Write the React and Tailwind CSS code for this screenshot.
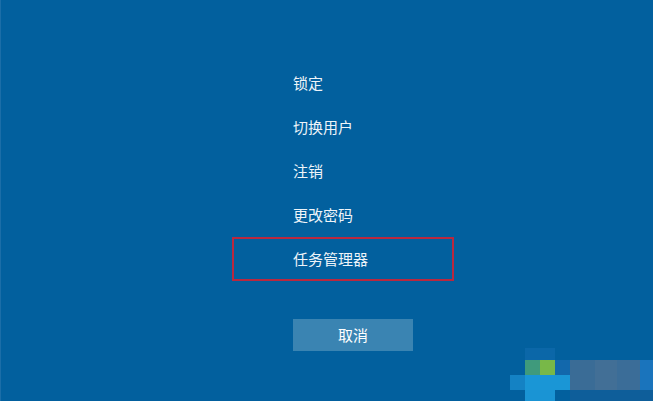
import React from 'react';

const items = ['锁定', '切换用户', '注销', '更改密码'];

// pixel mosaic in the bottom-right corner
const blocks = [
  { x: 525, y: 348, w: 30, h: 12, c: '#0b67a8' },
  { x: 525, y: 360, w: 15, h: 15, c: '#3f9a7c' },
  { x: 540, y: 360, w: 15, h: 15, c: '#78b848' },
  { x: 555, y: 360, w: 15, h: 15, c: '#1268ac' },
  { x: 570, y: 360, w: 25, h: 30, c: '#3a6c96' },
  { x: 595, y: 360, w: 22, h: 30, c: '#426f96' },
  { x: 617, y: 360, w: 23, h: 30, c: '#3b6d98' },
  { x: 640, y: 360, w: 13, h: 30, c: '#1a74bc' },
  { x: 510, y: 375, w: 15, h: 15, c: '#1482c4' },
  { x: 525, y: 375, w: 45, h: 15, c: '#1a96d6' },
  { x: 525, y: 390, w: 30, h: 11, c: '#1a94d4' },
  { x: 570, y: 390, w: 83, h: 11, c: '#0e5e9a' },
];

export default function App() {
  return (
    <div
      className="relative w-[653px] h-[401px] overflow-hidden bg-[#02609e] border-l border-[#1b6ea8] flex flex-col pt-[61px]"
      style={{ fontFamily: '"Noto Sans CJK SC", "Noto Sans", sans-serif' }}
    >
      <div className="ml-[231px] flex flex-col">
        {items.map((t) => (
          <div key={t} className="h-[44px] w-[222px] flex items-center pl-[61px] text-[15px] text-[#eef4f9]">
            {t}
          </div>
        ))}
        <div className="h-[44px] w-[222px] flex items-center pl-[59px] border-2 border-[#b9283f] text-[15px] text-[#eef4f9]">
          任务管理器
        </div>
      </div>

      <button className="mt-[38px] ml-[292px] w-[120px] h-[32px] bg-[#3a84b2] text-[15px] text-white flex items-center justify-center">
        取消
      </button>

      <svg className="absolute left-0 top-0" width="653" height="401" viewBox="0 0 653 401">
        {blocks.map((b, i) => (
          <rect key={i} x={b.x - 1} y={b.y} width={b.w} height={b.h} fill={b.c} />
        ))}
      </svg>
    </div>
  );
}
